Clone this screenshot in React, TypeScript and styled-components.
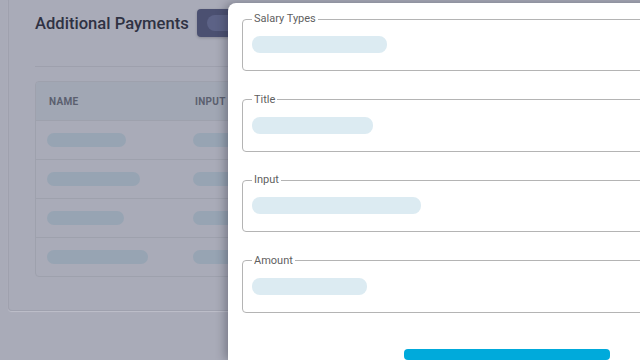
import React from 'react';
import styled, { createGlobalStyle } from 'styled-components';

const GlobalStyle = createGlobalStyle`
  html, body {
    margin: 0;
    padding: 0;
    overflow: hidden;
    background: #a9abb8;
    font-family: Roboto, "Liberation Sans", sans-serif;
  }
`;

const Screen = styled.div`
  position: relative;
  width: 640px;
  height: 360px;
  overflow: hidden;
  padding-left: 8px;
  box-sizing: border-box;
`;

const Card = styled.section`
  width: 640px;
  box-sizing: border-box;
  padding: 9px 26px 33px;
  border: 1px solid #9fa1ae;
  border-top: none;
  border-radius: 0 0 4px 4px;
  box-shadow: 0 1px 1px rgba(255, 255, 255, 0.25);
`;

const Header = styled.div`
  display: flex;
  align-items: center;
  gap: 8px;
  height: 28px;
`;

const Title = styled.h1`
  margin: 0;
  font-size: 16.6px;
  font-weight: 500;
  color: #2f3243;
`;

const AddButton = styled.button`
  display: flex;
  align-items: center;
  width: 90px;
  height: 28px;
  padding: 0 10px;
  border: none;
  border-radius: 4px;
  background: #4b5071;
  box-shadow: 0 1px 3px rgba(0, 0, 0, 0.2);
`;

const ButtonPill = styled.span`
  display: block;
  width: 60px;
  height: 16px;
  border-radius: 8px;
  background: #5c6286;
`;

const Divider = styled.hr`
  margin: 29px 0 0;
  border: none;
  border-top: 1px solid #9ea0ad;
`;

const Table = styled.div`
  margin-top: 14px;
  border: 1px solid #9ea1ad;
  border-radius: 4px;
  overflow: hidden;
`;

const Row = styled.div<{ $head?: boolean }>`
  display: grid;
  grid-template-columns: 146px 160px 1fr;
  align-items: center;
  height: ${(p) => (p.$head ? '38px' : '39px')};
  background: ${(p) => (p.$head ? '#a1a7b4' : 'transparent')};
  border-top: ${(p) => (p.$head ? 'none' : '1px solid #9ea1ad')};
  box-sizing: border-box;
`;

const HeadCell = styled.div`
  padding-left: 13px;
  font-size: 10px;
  font-weight: 700;
  color: #5b5f6f;
  letter-spacing: 0.3px;
  text-transform: uppercase;
`;

const Cell = styled.div`
  padding-left: 11px;
`;

const Bar = styled.span<{ $w: number }>`
  display: block;
  width: ${(p) => p.$w}px;
  height: 14px;
  border-radius: 7px;
  background: #97a4b3;
`;

const Drawer = styled.aside`
  position: absolute;
  top: 3px;
  left: 228px;
  bottom: 0;
  width: 558px;
  box-sizing: border-box;
  padding: 10px 14px 0;
  background: #ffffff;
  border-radius: 8px 0 0 0;
  box-shadow: -3px 0 10px rgba(30, 32, 45, 0.35);
  display: flex;
  flex-direction: column;
  gap: 22.5px;
`;

const Field = styled.fieldset`
  margin: 0;
  padding: 0 9px 17px;
  border: 1px solid #b4b4b4;
  border-radius: 4px;
  min-width: 0;
`;

const Legend = styled.legend`
  padding: 0 2px;
  font-size: 11px;
  line-height: 12px;
  color: #5f5f5f;
`;

const Skeleton = styled.span<{ $w: number }>`
  display: block;
  margin-top: 11px;
  width: ${(p) => p.$w}px;
  height: 17px;
  border-radius: 8px;
  background: #dcebf2;
`;

const SubmitButton = styled.button`
  align-self: center;
  width: 206px;
  height: 36px;
  margin-top: 14px;
  border: none;
  border-radius: 4px;
  background: #00aadb;
`;

const rows = [79, 93, 77, 101];
const fields = [
  { label: 'Salary Types', w: 135 },
  { label: 'Title', w: 121 },
  { label: 'Input', w: 169 },
  { label: 'Amount', w: 115 },
];

export default function App() {
  return (
    <>
      <GlobalStyle />
      <Screen>
        <Card>
          <Header>
            <Title>Additional Payments</Title>
            <AddButton>
              <ButtonPill />
            </AddButton>
          </Header>
          <Divider />
          <Table>
            <Row $head>
              <HeadCell>Name</HeadCell>
              <HeadCell>Input</HeadCell>
              <HeadCell>Amount</HeadCell>
            </Row>
            {rows.map((w, i) => (
              <Row key={i}>
                <Cell>
                  <Bar $w={w} />
                </Cell>
                <Cell>
                  <Bar $w={80} />
                </Cell>
                <Cell>
                  <Bar $w={70} />
                </Cell>
              </Row>
            ))}
          </Table>
        </Card>
        <Drawer>
          {fields.map((f) => (
            <Field key={f.label}>
              <Legend>{f.label}</Legend>
              <Skeleton $w={f.w} />
            </Field>
          ))}
          <SubmitButton />
        </Drawer>
      </Screen>
    </>
  );
}
